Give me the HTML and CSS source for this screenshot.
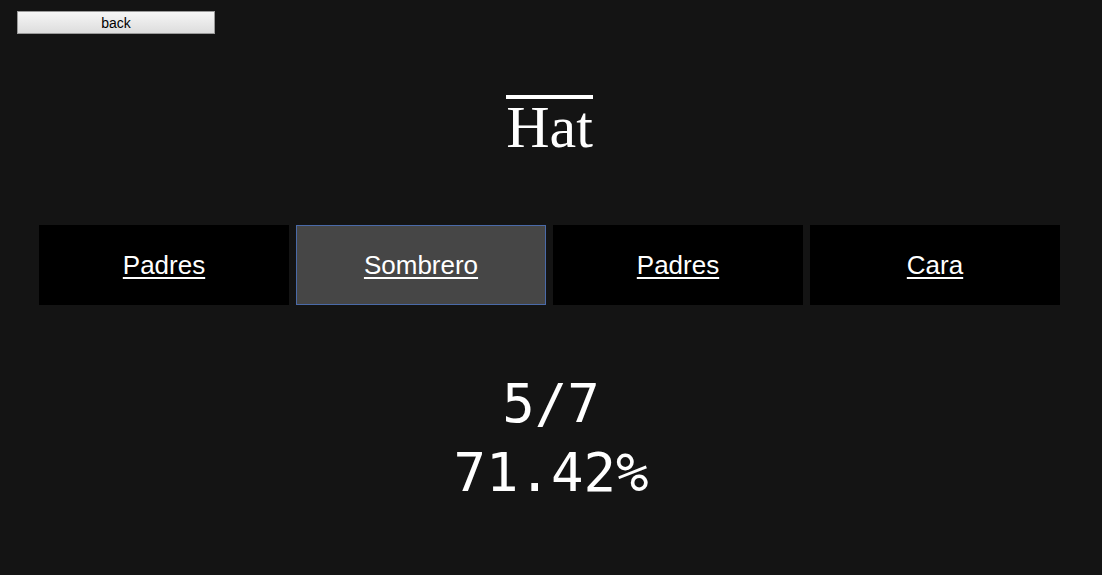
FILE: index.html
```html
<!DOCTYPE html>
<html>
<head>
<meta charset="utf-8">
<link rel="stylesheet" href="styles.css">
</head>
<body>
<div class="topbar"><button class="back">back</button></div>
<h1 class="word"><span class="word-text">Hat</span></h1>
<div class="choices">
  <a class="choice" href="#">Padres</a>
  <a class="choice selected" href="#">Sombrero</a>
  <a class="choice" href="#">Padres</a>
  <a class="choice" href="#">Cara</a>
</div>
<div class="score">
  <div>5/7</div>
  <div>71.42%</div>
</div>
</body>
</html>
```
FILE: styles.css
```css
html, body {
  margin: 0;
  padding: 0;
  background: #141414;
  color: #fff;
}
body {
  width: 1102px;
  height: 575px;
  overflow: hidden;
}
.topbar {
  padding: 11px 0 0 17px;
  height: 23px;
}
.back {
  display: block;
  box-sizing: border-box;
  width: 198px;
  height: 23px;
  margin: 0;
  padding: 0;
  font-family: "Liberation Sans", Arial, sans-serif;
  font-size: 14px;
  color: #000;
  background: linear-gradient(#f6f6f6, #dddddd);
  border: 1px solid #9a9a9a;
  border-radius: 0;
}
.word {
  margin: 61px 3px 0 0;
  text-align: center;
  font-family: "Liberation Serif", "Times New Roman", serif;
  font-weight: normal;
  font-size: 60px;
  line-height: 57px;
}
.word-text {
  display: inline-block;
  border-top: 4px solid #fff;
  line-height: 57px;
}
.choices {
  display: flex;
  gap: 7px;
  margin: 69px 0 0 39px;
}
.choice {
  box-sizing: border-box;
  width: 250px;
  height: 80px;
  display: flex;
  align-items: center;
  justify-content: center;
  background: #000;
  color: #fff;
  font-family: "Liberation Sans", Arial, sans-serif;
  font-size: 26px;
  text-decoration: underline;
  text-underline-offset: 3px;
}
.choice.selected {
  background: #464646;
  border: 1px solid #4a6aa8;
}
.score {
  margin-top: 64px;
  text-align: center;
  font-family: "DejaVu Sans Mono", monospace;
  font-size: 54px;
  line-height: 69px;
}
```
